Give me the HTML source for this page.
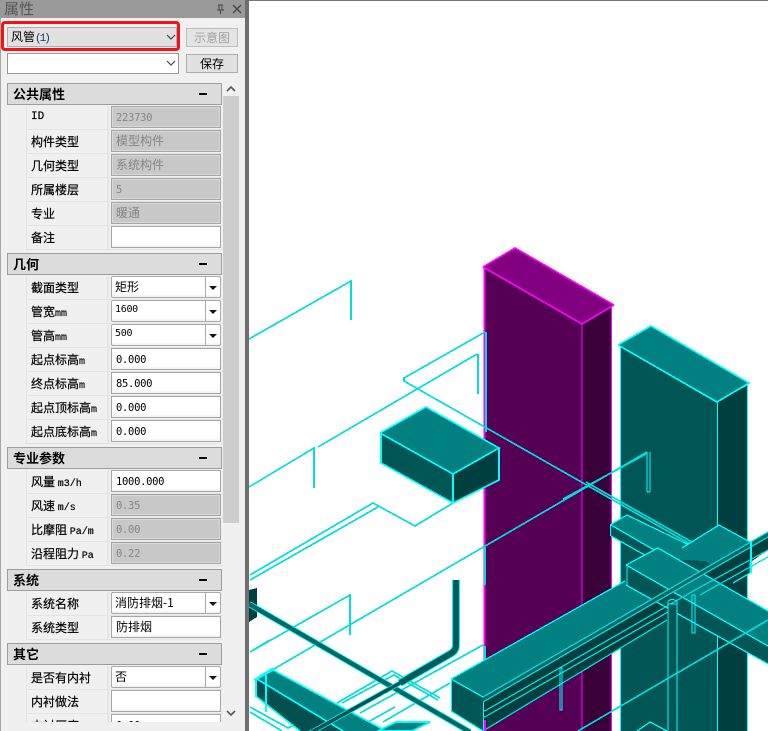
<!DOCTYPE html>
<html><head><meta charset="utf-8"><style>
html,body{margin:0;padding:0;width:768px;height:731px;overflow:hidden;background:#fff}
body{position:relative;font-family:"Liberation Sans","WenQuanYi Zen Hei","Noto Sans CJK SC",sans-serif;font-size:12px;color:#000}
div,span{box-sizing:border-box}
.a{position:absolute}
#p{position:absolute;left:0;top:0;width:245px;height:731px;background:#f0f0f0;border-left:1px solid #a8a8a8}
#clip{position:absolute;left:-1px;top:0;width:224px;height:722px;overflow:hidden}
.h{position:absolute;left:7px;width:215px;height:22px;background:#dcdcdc;border:1px solid #9c9c9c;font:bold 13px/20px "WenQuanYi Zen Hei","Noto Sans CJK SC",sans-serif;padding-left:5px;color:#000}
.h:after{content:"";position:absolute;left:191px;top:9px;width:8px;height:2px;background:#000}
.r{position:absolute;left:26px;width:197px;height:24px;border-left:1px solid #e4e4e4;border-bottom:1px solid #e4e4e4}
.r:before{content:"";position:absolute;left:80px;top:0;width:2px;height:23px;background:#e6e6e6}
.l{position:absolute;left:4px;top:4px;white-space:nowrap;font:12px/15px "WenQuanYi Zen Hei","Noto Sans CJK SC",sans-serif;color:#000;-webkit-text-stroke:.2px #000}
.l i{font:normal 10px/15px "Liberation Mono",monospace}
.f{position:absolute;left:84px;top:0;width:110px;height:22px;background:linear-gradient(#fff 85%,#f0f0f0);border:1px solid #a6a6a6;font:12px/19px "WenQuanYi Zen Hei","Noto Sans CJK SC",sans-serif;padding-left:4px;white-space:nowrap;color:#000}
.f b{font:normal 10.5px/20px "DejaVu Sans Mono","Liberation Mono",monospace;letter-spacing:-.3px}
.g{background:#c8c8c8;color:#858585;box-shadow:inset 0 0 0 1px #d8d8d8}
.s{border-radius:2px;border-color:#aaa;padding-left:3px}
.s:before{content:"";position:absolute;right:14px;top:0;height:20px;width:1px;background:#aaa}
.s:after{content:"";position:absolute;right:3px;top:9px;border:4px solid transparent;border-top:4px solid #111;border-bottom:0}
.s b{font-size:10px;line-height:18px;display:block}
</style></head><body>
<div id="p">
<div class="a" style="left:-1px;top:0;width:246px;height:18px;background:#9a9a9a;color:#565656;font:15px/18px 'WenQuanYi Zen Hei','Noto Sans CJK SC',sans-serif;padding-left:4px">属性</div>
<svg class="a" style="left:212px;top:2px" width="32" height="14"><path d="M5 3h5M6 3v5M9 3v5M4 8h7M7.5 8v4" stroke="#444" fill="none"/><path d="M20 3l8 8M28 3l-8 8" stroke="#444" stroke-width="1.3" fill="none"/></svg>
<div class="a" style="left:0;top:21px;width:179px;height:30px;border:3px solid #f01414;border-radius:4px"></div>
<div class="a" style="left:6px;top:27px;width:170px;height:20px;background:#e1e1e1;border:1px solid #adadad;padding-left:3px;font:12px/18px 'WenQuanYi Zen Hei','Noto Sans CJK SC',sans-serif">风管<span style="font:11px 'Liberation Mono',monospace;color:#123c68;letter-spacing:-2px">(1)</span></div>
<svg class="a" style="left:165px;top:34px" width="10" height="7"><path d="M1 1l4 4 4-4" stroke="#444" fill="none" stroke-width="1.2"/></svg>
<div class="a" style="left:185px;top:28px;width:52px;height:19px;background:#e4e4e4;border:1px solid #bdbdbd;text-align:center;color:#a0a0a0;font:12px/17px 'WenQuanYi Zen Hei','Noto Sans CJK SC',sans-serif">示意图</div>
<div class="a" style="left:6px;top:53px;width:172px;height:21px;background:#fff;border:1px solid #9a9a9a"></div>
<svg class="a" style="left:165px;top:60px" width="10" height="7"><path d="M1 1l4 4 4-4" stroke="#444" fill="none" stroke-width="1.2"/></svg>
<div class="a" style="left:185px;top:54px;width:52px;height:19px;background:#e1e1e1;border:1px solid #adadad;text-align:center;font:12px/17px 'WenQuanYi Zen Hei','Noto Sans CJK SC',sans-serif">保存</div>
<div class="a" style="left:222px;top:96px;width:16px;height:427px;background:#cdcdcd"></div>
<svg class="a" style="left:223px;top:84px" width="14" height="10"><path d="M3 7l4-4 4 4" stroke="#555" fill="none" stroke-width="1.6"/></svg>
<svg class="a" style="left:223px;top:708px" width="14" height="10"><path d="M3 3l4 4 4-4" stroke="#555" fill="none" stroke-width="1.6"/></svg>
<div id="clip">
<div class="h" style="top:83px">公共属性</div>
<div class="r" style="top:106px"><div class="l" style="font:11px/15px 'Liberation Mono',monospace">ID</div><div class="f g"><b>223730</b></div></div>
<div class="r" style="top:130px"><div class="l">构件类型</div><div class="f g">模型构件</div></div>
<div class="r" style="top:154px"><div class="l">几何类型</div><div class="f g">系统构件</div></div>
<div class="r" style="top:178px"><div class="l">所属楼层</div><div class="f g"><b>5</b></div></div>
<div class="r" style="top:202px"><div class="l">专业</div><div class="f g">暖通</div></div>
<div class="r" style="top:226px"><div class="l">备注</div><div class="f"></div></div>
<div class="h" style="top:253px">几何</div>
<div class="r" style="top:276px"><div class="l">截面类型</div><div class="f s">矩形</div></div>
<div class="r" style="top:300px"><div class="l">管宽<i>mm</i></div><div class="f s"><b>1600</b></div></div>
<div class="r" style="top:324px"><div class="l">管高<i>mm</i></div><div class="f s"><b>500</b></div></div>
<div class="r" style="top:348px"><div class="l">起点标高<i>m</i></div><div class="f"><b>0.000</b></div></div>
<div class="r" style="top:372px"><div class="l">终点标高<i>m</i></div><div class="f"><b>85.000</b></div></div>
<div class="r" style="top:396px"><div class="l">起点顶标高<i>m</i></div><div class="f"><b>0.000</b></div></div>
<div class="r" style="top:420px"><div class="l">起点底标高<i>m</i></div><div class="f"><b>0.000</b></div></div>
<div class="h" style="top:447px">专业参数</div>
<div class="r" style="top:470px"><div class="l">风量 <i>m3/h</i></div><div class="f"><b>1000.000</b></div></div>
<div class="r" style="top:494px"><div class="l">风速 <i>m/s</i></div><div class="f g"><b>0.35</b></div></div>
<div class="r" style="top:518px"><div class="l">比摩阻 <i>Pa/m</i></div><div class="f g"><b>0.00</b></div></div>
<div class="r" style="top:542px"><div class="l">沿程阻力 <i>Pa</i></div><div class="f g"><b>0.22</b></div></div>
<div class="h" style="top:569px">系统</div>
<div class="r" style="top:592px"><div class="l">系统名称</div><div class="f s">消防排烟-1</div></div>
<div class="r" style="top:616px"><div class="l">系统类型</div><div class="f">防排烟</div></div>
<div class="h" style="top:643px">其它</div>
<div class="r" style="top:666px"><div class="l">是否有内衬</div><div class="f s">否</div></div>
<div class="r" style="top:690px"><div class="l">内衬做法</div><div class="f"></div></div>
<div class="r" style="top:714px"><div class="l">内衬厚度</div><div class="f"><b>0.00</b></div></div>
</div>
</div>
<div class="a" style="left:245px;top:0;width:4px;height:731px;background:#6e6e6e"></div>
<div class="a" style="left:249px;top:0;width:519px;height:1px;background:#777"></div>
<svg class="a" style="left:249px;top:1px" width="519" height="730" viewBox="249 1 519 730" shape-rendering="crispEdges" stroke-width="1.7">
<g fill="none" stroke="#0dd">
<path d="M249 339L351 281V320"/><path d="M249 487L314 448V488"/>
<path d="M318 447L477 354"/><path d="M478 354V394"/>
</g>
<polygon points="484,267 582,324 582,731 484,731" fill="#550055"/>
<polygon points="582,324 612,307 612,731 582,731" fill="#3a003a"/>
<polygon points="483,267 515,248 614,305 582,324" fill="#800080"/>
<path d="M483 267L582 324L614 305M483 267L515 248L614 305M484.5 267V731" fill="none" stroke="#f0f"/>
<path d="M582 324V731M611.5 307V731" fill="none" stroke="#f0f" stroke-width="1"/>
<polygon points="620,346 717,402 717,731 620,731" fill="#005555"/>
<polygon points="717,402 748,385 748,731 717,731" fill="#003f3f"/>
<polygon points="618,345 651,326 749,383 717,402" fill="#008080"/>
<path d="M618 345L651 326L749 383L717 402L618 345" fill="none" stroke="#0ff"/>
<path d="M620.5 346V731M717.5 402V731M747.5 385V731" fill="none" stroke="#0ff" stroke-width="1"/>
<g fill="none" stroke="#0dd">
<path d="M485 332L404 378L404 381L720 561"/><path d="M486 332V432"/>
<path d="M586 482L720 558"/>
<path d="M255 680L590 485L647 452"/><path d="M563 499L646 454"/>
<path d="M250 652L350 595V635"/>
<path d="M250 575L373 503L415 526L453 503"/><path d="M250 580L378 507"/>
<path d="M485 547V585"/><path d="M485 646V660"/>
<path d="M250 652L270 640"/>
<path d="M250 707L288 728L305 720M250 712L282 731"/>
<path d="M337 703L392 671L440 698M342 703L394 675L438 700"/>
<path d="M360 713L483 645"/><path d="M383 722L450 683"/><path d="M352 731L395 707"/>
</g>
<path d="M647 452V492M650 452V492M647 492H650" fill="none" stroke="#0ff" stroke-width="1"/>
<polygon points="380,433 453,474 453,503 380,463" fill="#005555"/>
<polygon points="453,474 499,448 499,480 453,503" fill="#003f3f"/>
<polygon points="380,433 426,407 499,448 453,474" fill="#008080"/>
<path d="M380 433L426 407L499 448L453 474L380 433M381 433V463L453 503L499 480V448M453 474V503" fill="none" stroke="#0ff"/>
<polygon points="249,590 257,588 257,617 249,622" fill="#003f3f"/>
<path d="M456 580V645Q456 651 450 654L400 683" fill="none" stroke="#0ff" stroke-width="8" shape-rendering="auto"/>
<path d="M456 580V645Q456 651 450 654L400 683" fill="none" stroke="#005a5a" stroke-width="6" shape-rendering="auto"/>
<polygon points="257,679 343,731 300,731 257,697" fill="#005050"/>
<polygon points="257,679 273,670 386,731 343,731" fill="#008080"/>
<path d="M257 679L273 670L386 731M257 679L343 731M257 697L300 731M256 679V697" fill="none" stroke="#0ff"/>
<path d="M266 675V712" fill="none" stroke="#0ff"/>
<path d="M254 680L273 668" fill="none" stroke="#0ff"/>
<path d="M249 604L470 732" fill="none" stroke="#0ff" stroke-width="6" shape-rendering="auto"/>
<path d="M249 604L470 732" fill="none" stroke="#006666" stroke-width="4.400" shape-rendering="auto"/>
<path d="M400 683L310 733" fill="none" stroke="#0ff" stroke-width="5" shape-rendering="auto"/>
<path d="M400 683L310 733" fill="none" stroke="#005050" stroke-width="3.500" shape-rendering="auto"/>
<polygon points="378,731 396,722 430,722 412,731" fill="#008080" stroke="#0ff"/>
<polygon points="611,525 651,558 720,562 627,515" fill="#008080"/>
<polygon points="611,525 680,565 680,575 611,536" fill="#005555"/>
<path d="M610 525L627 515L720 560M611 525L680 565M611 536L650 558M610.500 525V536" fill="none" stroke="#0ff" stroke-width="1.300"/>
<polygon points="712,565 750,542 750,573 733,583" fill="#003f3f"/>
<polygon points="682,548 719,525 750,542 712,565" fill="#008080"/>
<path d="M682 548L719 525L750 542V573L733 583" fill="none" stroke="#0ff" stroke-width="1.300"/>
<polygon points="483,697 768,532 768,550 667,620 483,731" fill="#003f3f"/>
<polygon points="451,679 625,581 670,592 483,697" fill="#008080"/>
<polygon points="451,679 483,697 483,731 451,711" fill="#005555"/>
<path d="M451 679L625 581M451 679L483 697M451 711L483 731M451.500 679V711M483.5 697V731" fill="none" stroke="#0ff" stroke-width="1.300"/>
<polygon points="626,565 768,646 768,664 626,585" fill="#005555"/>
<polygon points="626,565 658,548 768,611 768,646" fill="#008080"/>
<path d="M626 565L658 548L768 611M626 565L768 646M626 585L768 664M627 565V585" fill="none" stroke="#0ff" stroke-width="1.300"/>
<polygon points="483,697 768,532 768,537 483,702" fill="#006464"/>
<path d="M483 697L768 532M483 702L768 537" fill="none" stroke="#0dd" stroke-width="1.300"/>
<path d="M483 712L695 590M483 718L668 612M483 731L667 620" fill="none" stroke="#0dd" stroke-width="1.300"/>
<path d="M695 590L768 550M700 595L768 557" fill="none" stroke="#0dd" stroke-width="1.300"/>
<polygon points="668,604 677,604 677,731 668,731" fill="#005555"/>
<path d="M668 601Q672 598 677 601V731M668 601V731M668 604H677" fill="none" stroke="#0ff" stroke-width="1"/>
<path d="M692 595H695V633H692V595M560 668H562V710H560V668" fill="none" stroke="#0ff" stroke-width="1"/>
<path d="M578 731L768 620" fill="none" stroke="#0dd"/>
<path d="M637 731L650 722L667 731" fill="none" stroke="#0ff" stroke-width="1.300"/>
<path d="M485 720V731" fill="none" stroke="#f0f"/>
<path d="M751 541V573" fill="none" stroke="#0ff"/>
</svg>
</body></html>
